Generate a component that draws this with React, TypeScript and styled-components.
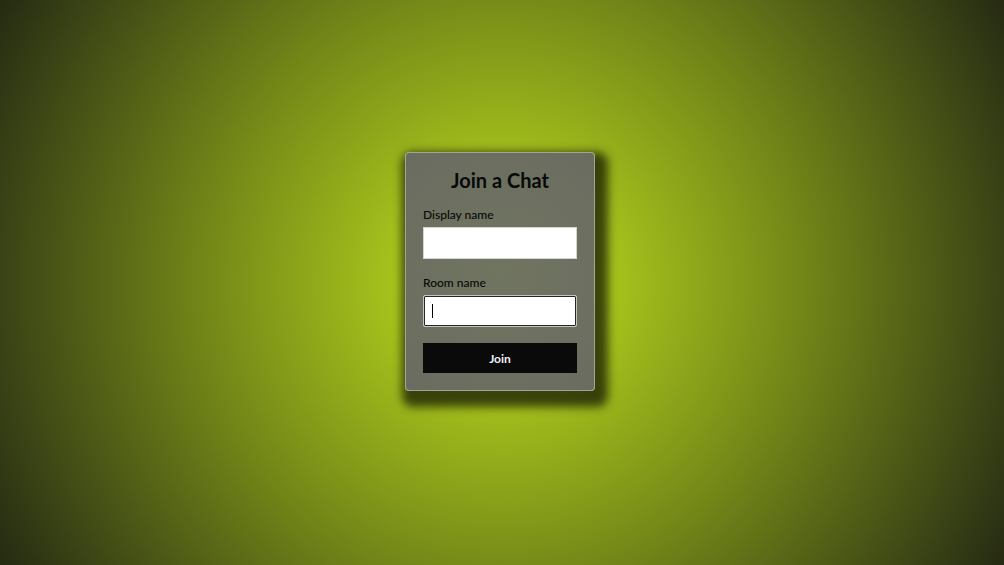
import React from 'react';
import styled, { createGlobalStyle } from 'styled-components';

const GlobalStyle = createGlobalStyle`
  *, *::before, *::after { box-sizing: border-box; }
  body {
    margin: 0;
    font-family: "Trebuchet MS", Lato, "Open Sans", sans-serif;
    color: #060a08;
  }
`;

const Page = styled.main`
  min-height: 100vh;
  display: flex;
  align-items: center;
  justify-content: center;
  padding: 16px 20px 38px 16px;
  background: radial-gradient(
    circle farthest-corner at center,
    #b9d81d 0%,
    #a4c01c 20%,
    #778c18 49%,
    #3a4315 87%,
    #252a12 100%
  );
`;

const Card = styled.form`
  display: flex;
  flex-direction: column;
  gap: 16px;
  width: 100%;
  max-width: 190px;
  padding: 16px 17px 17px;
  border: 1px solid #a2a494;
  border-radius: 4px;
  background: radial-gradient(circle at center, #707560, #6b6c61);
  box-shadow: 5px 8px 10px 8px rgba(0, 0, 0, 0.65);
`;

const Title = styled.h1`
  margin: 0;
  font-size: 20px;
  line-height: 22px;
  font-weight: 700;
  text-align: center;
`;

const Field = styled.div`
  display: flex;
  flex-direction: column;
  gap: 4px;
`;

const Label = styled.label`
  font-size: 12px;
  line-height: 16px;
  font-weight: 500;
`;

const InputFrame = styled.div`
  position: relative;
  display: flex;
`;

const Input = styled.input<{ $active?: boolean }>`
  width: 100%;
  height: 32px;
  padding: 8px;
  border: 1px solid ${(p) => (p.$active ? '#c4c5be' : '#d4d5cf')};
  border-radius: ${(p) => (p.$active ? 2 : 0)}px;
  background: #fff;
  box-shadow: ${(p) => (p.$active ? 'inset 0 0 0 1px #24262a' : 'none')};
  font: inherit;
  font-size: 12px;
  color: #0a0a0a;
  caret-color: transparent;
  outline: none;
`;

const Caret = styled.span`
  position: absolute;
  left: 9px;
  top: 9px;
  width: 1px;
  height: 14px;
  background: #000;
  pointer-events: none;
`;

const JoinButton = styled.button`
  height: 30px;
  padding: 0;
  border: 0;
  background: #0a0a0a;
  color: #eef3f6;
  font: inherit;
  font-size: 12px;
  font-weight: 700;
  cursor: pointer;
`;

export default function App() {
  return (
    <>
      <GlobalStyle />
      <Page>
        <Card onSubmit={(e: React.FormEvent) => e.preventDefault()}>
          <Title>Join a Chat</Title>
          <Field>
            <Label htmlFor="display-name">Display name</Label>
            <InputFrame>
              <Input id="display-name" type="text" />
            </InputFrame>
          </Field>
          <Field>
            <Label htmlFor="room-name">Room name</Label>
            <InputFrame>
              <Input id="room-name" type="text" $active autoFocus />
              <Caret />
            </InputFrame>
          </Field>
          <JoinButton type="submit">Join</JoinButton>
        </Card>
      </Page>
    </>
  );
}
